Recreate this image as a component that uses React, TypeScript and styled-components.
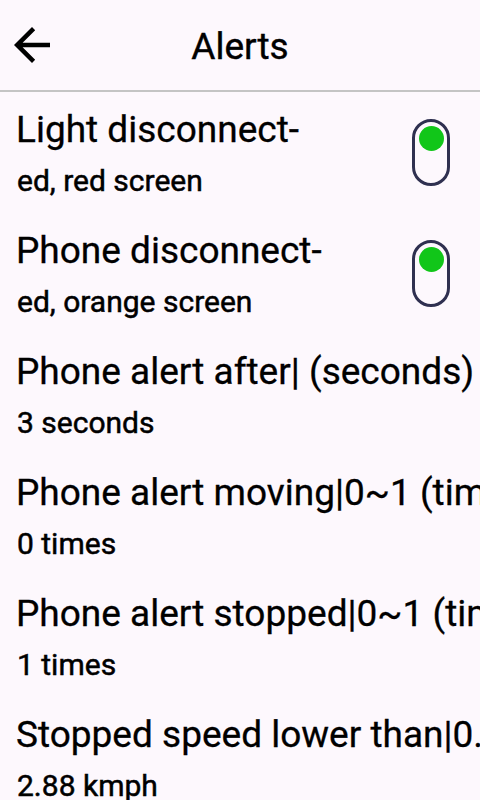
import React from "react";
import styled, { createGlobalStyle } from "styled-components";

const Global = createGlobalStyle`
  html, body { margin: 0; padding: 0; background: #fdf8fd; }
  body { font-family: Roboto, "Noto Sans", sans-serif; color: #000; overflow: hidden; }
`;

const Page = styled.div`
  width: 480px;
  height: 800px;
  overflow: hidden;
  background: #fdf8fd;
  display: flex;
  flex-direction: column;
`;

const Header = styled.header`
  height: 90px;
  flex: none;
  border-bottom: 2px solid #c4c4c4;
  display: grid;
  grid-template-columns: 60px 1fr 60px;
  align-items: center;
`;

const BackButton = styled.button`
  border: none;
  background: none;
  padding: 0 0 0 5px;
  margin: 0;
  display: flex;
  align-items: center;
  height: 54px;
  cursor: pointer;
`;

const Title = styled.h1`
  margin: 0;
  font-size: 37px;
  font-weight: 400;
  text-align: center;
  line-height: 1;
  padding-top: 2px;
  -webkit-text-stroke: 0.4px #000;
`;

const List = styled.div`
  display: flex;
  flex-direction: column;
`;

const Row = styled.div`
  display: flex;
  align-items: center;
  height: 121px;
  padding: 0 30px 0 16px;
  flex: none;
`;

const Texts = styled.div`
  flex: 1;
  min-width: 0;
  display: flex;
  flex-direction: column;
  gap: 14px;
  white-space: nowrap;
`;

const RowTitle = styled.div`
  font-size: 37px;
  line-height: 42px;
  -webkit-text-stroke: 0.3px #000;
`;

const RowSub = styled.div`
  font-size: 30px;
  font-weight: 400;
  line-height: 32px;
  padding-left: 1px;
  -webkit-text-stroke: 0.5px #000;
`;

const Toggle = styled.div<{ $on: boolean }>`
  flex: none;
  box-sizing: border-box;
  width: 38px;
  height: 67px;
  border: 3px solid #2f3050;
  border-radius: 19px;
  display: flex;
  flex-direction: column;
  align-items: center;
  justify-content: ${(p) => (p.$on ? "flex-start" : "flex-end")};
  padding: 4px 0;
`;

const Knob = styled.div`
  width: 25px;
  height: 25px;
  border-radius: 50%;
  background: #11c619;
`;

const items: { title: string; sub: string; toggle?: boolean }[] = [
  { title: "Light disconnect-", sub: "ed, red screen", toggle: true },
  { title: "Phone disconnect-", sub: "ed, orange screen", toggle: true },
  { title: "Phone alert after| (seconds)", sub: "3 seconds" },
  { title: "Phone alert moving|0~1 (times)", sub: "0 times" },
  { title: "Phone alert stopped|0~1 (times)", sub: "1 times" },
  { title: "Stopped speed lower than|0.5~10 (kmph)", sub: "2.88 kmph" },
];

export default function App() {
  return (
    <Page>
      <Global />
      <Header>
        <BackButton aria-label="Back">
          <svg width="54" height="54" viewBox="0 0 24 24">
            <path d="M20 11H7.83l5.59-5.59L12 4l-8 8 8 8 1.41-1.41L7.83 13H20v-2z" fill="#000" />
          </svg>
        </BackButton>
        <Title>Alerts</Title>
        <span />
      </Header>
      <List>
        {items.map((it) => (
          <Row key={it.title}>
            <Texts>
              <RowTitle>{it.title}</RowTitle>
              <RowSub>{it.sub}</RowSub>
            </Texts>
            {it.toggle && (
              <Toggle $on>
                <Knob />
              </Toggle>
            )}
          </Row>
        ))}
      </List>
    </Page>
  );
}
